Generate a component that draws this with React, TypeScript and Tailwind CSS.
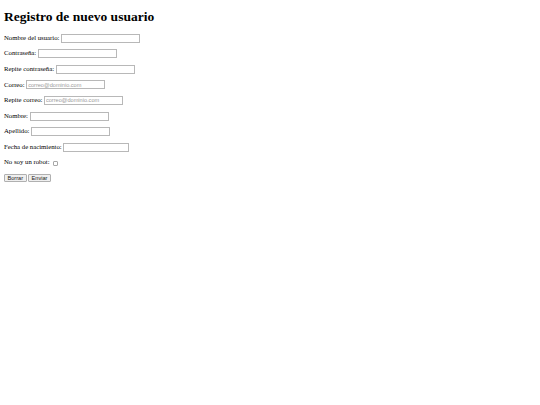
import React from 'react';

const fields: { label: string; type: string; placeholder?: string; width: string }[] = [
  { label: 'Nombre del usuario:', type: 'text', width: 'w-[79px]' },
  { label: 'Contraseña:', type: 'password', width: 'w-[79px]' },
  { label: 'Repite contraseña:', type: 'password', width: 'w-[79px]' },
  { label: 'Correo:', type: 'email', placeholder: 'correo@dominio.com', width: 'w-[79px]' },
  { label: 'Repite correo:', type: 'email', placeholder: 'correo@dominio.com', width: 'w-[79px]' },
  { label: 'Nombre:', type: 'text', width: 'w-[79px]' },
  { label: 'Apellido:', type: 'text', width: 'w-[79px]' },
  { label: 'Fecha de nacimiento:', type: 'text', width: 'w-[66px]' },
];

const App: React.FC = () => {
  return (
    <div className="min-h-[405px] w-[540px] bg-white px-[4px] font-['Liberation_Serif',serif] text-[6.75px] text-black">
      <h1 className="pt-[9px] pb-[9px] text-[13.5px] font-bold leading-[15.6px]">
        Registro de nuevo usuario
      </h1>

      <form className="flex flex-col gap-[6.6px]" onSubmit={(e) => e.preventDefault()}>
        {fields.map((f) => (
          <div key={f.label} className="flex h-[9px] items-center">
            <label className="whitespace-nowrap leading-none">{f.label}</label>
            <input
              type={f.type}
              placeholder={f.placeholder}
              className={`ml-[1.5px] h-[9px] ${f.width} border border-[#b8b8b8] bg-white px-[1px] font-['Liberation_Sans',sans-serif] text-[5.6px] outline-none placeholder:text-[#9a9a9a]`}
            />
          </div>
        ))}

        {/* robot check */}
        <div className="flex h-[9px] items-center">
          <label className="whitespace-nowrap leading-none">No soy un robot:</label>
          <span className="ml-[3px] mt-[1px] inline-block h-[5.5px] w-[5.5px] rounded-[1px] border border-[#a8a8a8] bg-white" />
        </div>

        <div className="flex h-[9px] items-center gap-[1.5px]">
          <button
            type="reset"
            className="h-[8px] rounded-[1px] border border-[#b0b0b0] bg-[#efefef] px-[2.5px] font-['Liberation_Sans',sans-serif] text-[5.6px] leading-none text-[#222]"
          >
            Borrar
          </button>
          <button
            type="submit"
            className="h-[8px] rounded-[1px] border border-[#b0b0b0] bg-[#efefef] px-[2.5px] font-['Liberation_Sans',sans-serif] text-[5.6px] leading-none text-[#222]"
          >
            Enviar
          </button>
        </div>
      </form>
    </div>
  );
};

export default App;
